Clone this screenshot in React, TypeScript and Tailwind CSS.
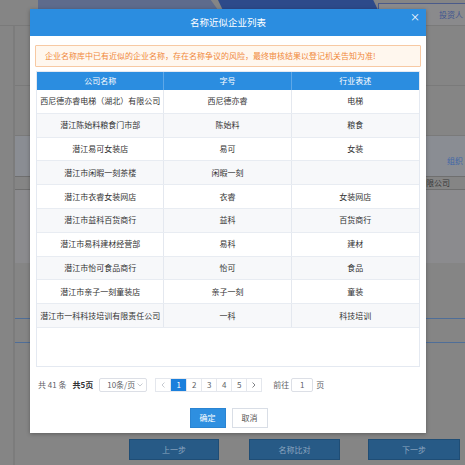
const rows = [
  ["西尼德亦睿电梯（湖北）有限公司", "西尼德亦睿", "电梯"],
  ["潜江陈始料粮食门市部", "陈始料", "粮食"],
  ["潜江易可女装店", "易可", "女装"],
  ["潜江市闲暇一刻茶楼", "闲暇一刻", ""],
  ["潜江市衣睿女装网店", "衣睿", "女装网店"],
  ["潜江市益科百货商行", "益科", "百货商行"],
  ["潜江市易科建材经营部", "易科", "建材"],
  ["潜江市怡可食品商行", "怡可", "食品"],
  ["潜江市亲子一刻童装店", "亲子一刻", "童装"],
  ["潜江市一科科技培训有限责任公司", "一科", "科技培训"],
];

const font = "font-['Microsoft_YaHei','Noto_Sans_CJK_SC',sans-serif]";

export default function App() {
  return (
    <div className={`relative w-[465px] h-[465px] overflow-hidden bg-[#858585] ${font}`}>
      {/* page behind the mask */}
      <div className="flex flex-col h-full">
        <div className="flex h-[26px] pl-[38px] border-b border-[#7a7a7a]">
          <div className="w-[180px] h-[10px] bg-[#5e6b8c] [clip-path:polygon(0_0,96%_0,100%_100%,0_100%)]" />
          <div className="w-[160px] h-[10px] bg-[#2d4a8a] [clip-path:polygon(0_0,97%_0,100%_100%,3%_100%)]" />
          <div className="flex-1 flex items-center justify-end pr-[2px] mt-[3px] h-[22px] border-t border-l border-[#4a5a8a] bg-[#8a8a8c] text-[8px] text-[#3e5590]">
            投资人
          </div>
        </div>
        <div className="flex flex-1">
          <div className="w-[15px] border-r-2 border-[#7c7c7c]" />
          <div className="flex-1 flex flex-col">
            <div className="h-[10px]" />
            <div className="flex-1 flex flex-col">
              <div className="w-full h-[50px] border-b border-[#7a7a7a]" />
              <div className="w-full h-[50px] border-b border-[#7a7a7a]" />
              <div className="w-full h-[40px] bg-[#8a8d93] flex justify-end pt-[19px] pr-[2px] text-[8px] text-[#3f67a8]">组织</div>
              <div className="w-full h-[14px] border-y border-[#6f6f6f] flex items-center pl-[411px] text-[8px] text-[#3a3a3a]">限公司</div>
              <div className="w-full h-[73px] bg-[#8b8b8e]" />
              <div className="w-full h-[56px] border-b border-[#4f6e98]" />
              <div className="w-full h-[24px] border-b border-[#4f6e98]" />
            </div>
            <div className="flex pl-[114px] pb-[5px] gap-[30px]">
              <div className="w-[90px] h-[21px] bg-[#275a86] border border-[#1f4d75] text-[8px] text-[#8ea7c0] flex items-center justify-center">上一步</div>
              <div className="w-[91px] h-[21px] bg-[#275a86] border border-[#1f4d75] text-[8px] text-[#8ea7c0] flex items-center justify-center">名称比对</div>
              <div className="ml-[-2px] w-[92px] h-[21px] bg-[#275a86] border border-[#1f4d75] text-[8px] text-[#8ea7c0] flex items-center justify-center">下一步</div>
            </div>
          </div>
        </div>
      </div>

      {/* modal */}
      <div className="absolute left-[30px] top-[9px] w-[396px] h-[424px] bg-white shadow-[0_1px_4px_rgba(0,0,0,0.3)] flex flex-col">
        <div className="relative h-[27px] bg-[#2b8de0] flex items-center justify-center text-white text-[9.5px]">
          名称近似企业列表
          <span className="absolute right-[6px] top-[3px] text-[10px] leading-none">×</span>
        </div>
        <div className="px-[5px] pt-[9px] flex flex-col">
          <div className="h-[22px] border border-[#f7c9a3] bg-[#fff7ee] rounded-[1px] flex items-center pl-[9px] text-[8px] text-[#f0883a]">
            企业名称库中已有近似的企业名称，存在名称争议的风险，最终审核结果以登记机关告知为准!
          </div>
          <div className="mt-[4px] h-[296px] mx-[1px] border border-[#e4e9f1] flex flex-col">
            <div className="grid grid-cols-3 h-[18px] bg-[#2b8de0] text-white text-[8px]">
              <div className="flex items-center justify-center border-r border-[#5ea8e8]">公司名称</div>
              <div className="flex items-center justify-center border-r border-[#5ea8e8]">字号</div>
              <div className="flex items-center justify-center">行业表述</div>
            </div>
            {rows.map((r, i) => (
              <div
                key={i}
                className={`grid grid-cols-3 h-[23.8px] text-[8px] text-[#333] border-b border-[#e8ecf2] ${i % 2 ? "bg-[#f7f8fa]" : "bg-white"}`}
              >
                <div className="flex items-center justify-center border-r border-[#e4e8ef] whitespace-nowrap">{r[0]}</div>
                <div className="flex items-center justify-center border-r border-[#e4e8ef]">{r[1]}</div>
                <div className="flex items-center justify-center">{r[2]}</div>
              </div>
            ))}
          </div>
          <div className="mt-[10px] h-[15px] flex items-center text-[8px] text-[#606266] pl-[3px]">
            <span>共 41 条</span>
            <span className="ml-[6px] font-bold text-[#303133]">共5页</span>
            <div className="ml-[6px] w-[48px] h-[14px] border border-[#dcdfe6] rounded-[2px] flex items-center justify-between pl-[7px] pr-[3px] text-[#606266]">
              <span>10条/页</span>
              <svg width="6" height="4" viewBox="0 0 6 4" fill="none" stroke="#b8bcc4" strokeWidth="0.8"><path d="M0.5 0.5 L3 3 L5.5 0.5" /></svg>
            </div>
            <div className="ml-[8px] flex h-[14px] border border-[#e4e7ed]">
              <div className="w-[15px] flex items-center justify-center border-r border-[#e4e7ed]">
                <svg width="4" height="6" viewBox="0 0 4 6" fill="none" stroke="#b8bcc4" strokeWidth="0.8"><path d="M3.5 0.5 L1 3 L3.5 5.5" /></svg>
              </div>
              <div className="w-[15px] flex items-center justify-center bg-[#1a7fdc] text-white">1</div>
              {["2", "3", "4", "5"].map((n) => (
                <div key={n} className="w-[15px] flex items-center justify-center border-l border-[#e4e7ed]">{n}</div>
              ))}
              <div className="w-[15px] flex items-center justify-center border-l border-[#e4e7ed]">
                <svg width="4" height="6" viewBox="0 0 4 6" fill="none" stroke="#606266" strokeWidth="0.8"><path d="M0.5 0.5 L3 3 L0.5 5.5" /></svg>
              </div>
            </div>
            <span className="ml-[11px]">前往</span>
            <div className="ml-[2px] w-[22px] h-[14px] border border-[#dcdfe6] rounded-[2px] flex items-center justify-center">1</div>
            <span className="ml-[3px]">页</span>
          </div>
          <div className="mt-[16px] flex justify-center gap-[6px] pl-[1px]">
            <div className="w-[36px] h-[20px] bg-[#2e8fe0] border border-[#2a84d2] text-white text-[8px] flex items-center justify-center">确定</div>
            <div className="w-[36px] h-[20px] bg-white border border-[#d9dee6] text-[#555] text-[8px] flex items-center justify-center">取消</div>
          </div>
        </div>
      </div>
    </div>
  );
}
